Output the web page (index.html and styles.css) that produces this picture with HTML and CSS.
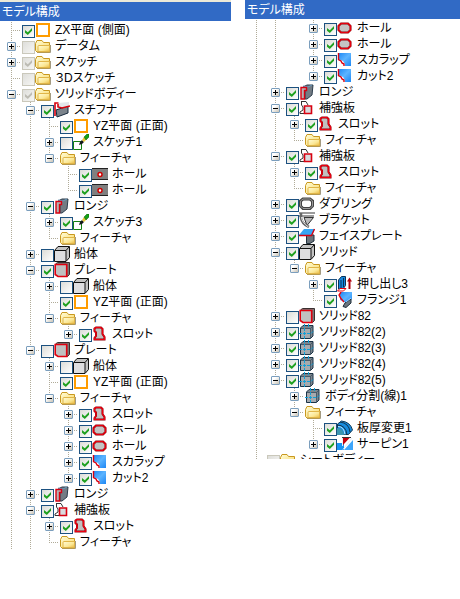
FILE: index.html
```html
<!DOCTYPE html>
<html lang="ja">
<head>
<meta charset="utf-8">
<meta name="viewport" content="width=device-width, initial-scale=1">
<title>モデル構成</title>
<link rel="stylesheet" href="styles.css">
</head>
<body>
<svg class="defs" aria-hidden="true">
  <defs>
    <linearGradient id="gold" x1="0" y1="0" x2="1" y2="1"><stop offset="0" stop-color="#fffcd8"/><stop offset=".6" stop-color="#fbe794"/><stop offset="1" stop-color="#e8b840"/></linearGradient>
    <linearGradient id="blue" x1="0" y1="0" x2="1" y2="1"><stop offset="0" stop-color="#1c86f4"/><stop offset=".5" stop-color="#5cb4ff"/><stop offset="1" stop-color="#1c86f4"/></linearGradient>
  </defs>
  <symbol id="plane" viewBox="0 0 16 16"><path d="M2 2h12v12H2z" fill="#fff" stroke="#ff9c00" stroke-width="2"/></symbol>
  <symbol id="folder" viewBox="0 0 16 16"><path d="M2 14.500h13.500V7" fill="none" stroke="#a39a80"/><path d="M.5 5.500l1.500-3h5l1.500 2h6v9.500H2L.5 12.500z" fill="url(#gold)" stroke="#c9981f"/><path d="M3 13.500v-5q0-1 1-1h10.500v6z" fill="url(#gold)" stroke="#e0b548"/></symbol>
  <symbol id="stiff" viewBox="0 0 16 16"><path d="M2 8l12-4v7L3 15z" fill="#7b838b" stroke="#17293c"/><path d="M4 1l11-1v4L8 6 4 5z" fill="#e3e6ea"/><path d="M4.500 1H1v13M4 2v3l4 1 8-2" fill="none" stroke="#d8000c" stroke-width="1.600"/></symbol>
  <symbol id="sketch" viewBox="0 0 16 16"><path d="M.5 7.500h8v8h-8z" fill="#fff" stroke="#138013"/><path d="M6 11l1-3 2-2 2 2-2 2z" fill="#15191c"/><path d="M9 6l2-3 3 2-3 3z" fill="#e8c83c"/><path d="M11 3l3-3h2v3l-3 3z" fill="#16a016" stroke="#0a5c0a" stroke-width=".5"/></symbol>
  <symbol id="darkhole" viewBox="0 0 16 16"><path d="M0 2h16v12H0z" fill="#808080"/><path d="M0 2.500h16M0 13.500h16" stroke="#222"/><circle cx="8" cy="8.500" r="2" fill="#fff" stroke="#d00000" stroke-width="1.500"/></symbol>
  <symbol id="longi" viewBox="0 0 16 16"><path d="M4 3l4-2h6l-1 10-5 4H6V5z" fill="#737c84" stroke="#2c3d4c"/><path d="M4 2l5 1 4-2" stroke="#6a9bc0" fill="none"/><path d="M2 3.500h5.500v3H5.500V15H2z" fill="#b4b4b4" stroke="#d80010" stroke-width="1.400"/></symbol>
  <symbol id="solid" viewBox="0 0 16 16"><path d="M.5 4.500l3.500-4h11.500v11l-3.500 4H.5z" fill="#c3c3c3" stroke="#101010"/><path d="M1 5h11v10H1z" fill="#dedee0"/><path d="M1 4.500h11V15M12 4.500l3-3.500" fill="none" stroke="#101010"/></symbol>
  <symbol id="plate" viewBox="0 0 16 16"><path d="M1.500 2l2-1.500h12v12l-2 2z" fill="#777" stroke="#3a3030"/><path d="M1.200 2.500h11.500v12H4l-2.800-2z" fill="#c0c0c0" stroke="#e0000f" stroke-width="1.600"/></symbol>
  <symbol id="slot" viewBox="0 0 16 16"><path d="M2.500 2.500L4 1.500h5l1.500 1.500v5l2 3v2.500h-10V12L4 10V6.500L2.500 5z" fill="#c0c0c0" stroke="#930008" stroke-width="2"/><path d="M2.500 2.500L4 1.500h5l1.500 1.500v5l2 3v2.500h-10V12L4 10V6.500L2.500 5z" fill="none" stroke="#ee0011" stroke-width="1.200"/></symbol>
  <symbol id="hole" viewBox="0 0 16 16"><path d="M4 3.500h7L13.500 6v4L11 12.500H4L1.500 10V6z" fill="#c4c4c4" stroke="#8d0008" stroke-width="2"/><path d="M4 3.500h7L13.500 6v4L11 12.500H4L1.500 10V6z" fill="none" stroke="#e8000f" stroke-width="1.200"/></symbol>
  <symbol id="cut" viewBox="0 0 16 16"><path d="M1 1h13v13H8V12L6 9 1 7z" fill="url(#blue)"/><path d="M1.500 1v6.500L4 9l1 2 2 1v2" fill="none" stroke="#d80010" stroke-width="1.400"/></symbol>
  <symbol id="stiffplate" viewBox="0 0 16 16"><path d="M2 1.500h5l2 3.500M2.500 1.500V5L4 7v3l-3 2v1.500h4" fill="none" stroke="#333"/><path d="M5.500 6h7v7.500h-7z" fill="#d9dadd" stroke="#d80010" stroke-width="1.600"/></symbol>
  <symbol id="doubling" viewBox="0 0 16 16"><path d="M4 3h7l2.500 2v5L11 12.500H4L1.500 10V5z" fill="#fff" stroke="#444" stroke-width="3"/><path d="M4 3h7l2.500 2v5L11 12.500H4L1.500 10V5z" fill="none" stroke="#999"/></symbol>
  <symbol id="bracket" viewBox="0 0 16 16"><path d="M0 1h16M0 4h15" stroke="#7b7b7b" stroke-width="1.400"/><path d="M5 5.500h9.500l-6.500 8z" fill="#bababa" stroke="#333"/><path d="M2 1v5q1 6 8 9" fill="none" stroke="#666" stroke-width="2.500"/><path d="M2.500 5q0 5 7 10" fill="none" stroke="#ddd"/></symbol>
  <symbol id="faceplate" viewBox="0 0 16 16"><path d="M7.500 7H15v6l-4 2.500H7.500z" fill="#6b747c" stroke="#20303c"/><path d="M0 7l5-6h11l-3 6z" fill="#35a5f5"/><path d="M0 7.500h12.500l3-6.500" fill="none" stroke="#d80010" stroke-width="1.400"/></symbol>
  <symbol id="extrude" viewBox="0 0 16 16"><path d="M1.500 4l3-3.500h4v9L6 13H1.500z" fill="#1689e0" stroke="#0c3055"/><path d="M4 4v8M6.500 2v9" stroke="#0c3055"/><path d="M.5 15L3 12.500h6L6.500 15z" fill="#fff" stroke="#e8000f"/><path d="M12.500 13V4" stroke="#b0000c" stroke-width="2"/><path d="M10 5.500l2.500-4 2.500 4z" fill="#b0000c"/></symbol>
  <symbol id="flange" viewBox="0 0 16 16"><path d="M3 0h12v7l-6 4-6-3z" fill="url(#blue)"/><path d="M8 11l6-4v4l-5 4.500-3-1z" fill="#6d767f" stroke="#1d2c38"/><path d="M9 10l5-4" stroke="#9cd1ff"/><path d="M4 0L2 3q1 3 5 7" fill="none" stroke="#e8000f" stroke-width="1.400"/></symbol>
  <symbol id="split" viewBox="0 0 16 16"><path d="M1.500 4L4 1.500h10V12l-2.500 2.500h-10z" fill="#7b848c" stroke="#1b3346"/><path d="M2 5h9v9H2z" fill="#a6aaae"/><path d="M2 4.500h9.500V14M11.500 4.500L14 2" fill="none" stroke="#34495a" stroke-width=".7"/><path d="M5.500 0v16M9.500 0v4M0 9.500h12l3-3" fill="none" stroke="#10a0d8" stroke-dasharray="3 1"/></symbol>
  <symbol id="thick" viewBox="0 0 16 16"><path d="M.5 4l4-3q9 1 11 9l-4 4.500H.5z" fill="#168bdd" stroke="#103a57"/><path d="M0 5q9 0 10 10M3 2q9 1 10 10" fill="none" stroke="#12334d"/><path d="M1 6.500q6 0 7 8" fill="none" stroke="#bdeaff"/><path d="M0 8q6 0 7 7H0z" fill="#3c96b0"/></symbol>
  <symbol id="serpin" viewBox="0 0 16 16"><path d="M0 7h7v7H0z" fill="#1793f4"/><path d="M7 14L16 4v10z" fill="#3fa6fb"/><path d="M5.500 1h8L6 9z" fill="#c4000c"/><path d="M5.500 10V2M6 13.500L15 2" stroke="#e9eef5"/><path d="M5 1.500h9" stroke="#333"/></symbol>
</svg>

<main class="panels">
<section class="panel framed">
<h2 class="title">モデル構成</h2>
<ul class="tree">
  <li><label class="node"><input type="checkbox" checked><svg><use href="#plane"/></svg>ZX平面 (側面)</label></li>
  <li><button class="toggle plus" aria-label="開く"></button><label class="node"><input type="checkbox" disabled><svg><use href="#folder"/></svg>データム</label></li>
  <li><button class="toggle plus" aria-label="開く"></button><label class="node"><input type="checkbox" checked disabled><svg><use href="#folder"/></svg>スケッチ</label></li>
  <li><label class="node"><input type="checkbox" disabled><svg><use href="#folder"/></svg>３Dスケッチ</label></li>
  <li class="more"><button class="toggle" aria-label="閉じる"></button><label class="node"><input type="checkbox" checked disabled><svg><use href="#folder"/></svg>ソリッドボディー</label>
    <ul>
      <li><button class="toggle" aria-label="閉じる"></button><label class="node"><input type="checkbox" checked><svg><use href="#stiff"/></svg>スチフナ</label>
        <ul>
          <li><label class="node"><input type="checkbox" checked><svg><use href="#plane"/></svg>YZ平面 (正面)</label></li>
          <li><button class="toggle plus" aria-label="開く"></button><label class="node"><input type="checkbox"><svg><use href="#sketch"/></svg>スケッチ1</label></li>
          <li><button class="toggle" aria-label="閉じる"></button><span class="node"><svg><use href="#folder"/></svg>フィーチャ</span>
            <ul>
              <li><label class="node"><input type="checkbox" checked><svg><use href="#darkhole"/></svg>ホール</label></li>
              <li><label class="node"><input type="checkbox" checked><svg><use href="#darkhole"/></svg>ホール</label></li>
            </ul>
          </li>
        </ul>
      </li>
      <li><button class="toggle" aria-label="閉じる"></button><label class="node"><input type="checkbox" checked><svg><use href="#longi"/></svg>ロンジ</label>
        <ul>
          <li><button class="toggle plus" aria-label="開く"></button><label class="node"><input type="checkbox" checked><svg><use href="#sketch"/></svg>スケッチ3</label></li>
          <li><span class="node"><svg><use href="#folder"/></svg>フィーチャ</span></li>
        </ul>
      </li>
      <li><button class="toggle plus" aria-label="開く"></button><label class="node"><input type="checkbox"><svg><use href="#solid"/></svg>船体</label></li>
      <li><button class="toggle" aria-label="閉じる"></button><label class="node"><input type="checkbox" checked><svg><use href="#plate"/></svg>プレート</label>
        <ul>
          <li><button class="toggle plus" aria-label="開く"></button><label class="node"><input type="checkbox"><svg><use href="#solid"/></svg>船体</label></li>
          <li><label class="node"><input type="checkbox" checked><svg><use href="#plane"/></svg>YZ平面 (正面)</label></li>
          <li><button class="toggle" aria-label="閉じる"></button><span class="node"><svg><use href="#folder"/></svg>フィーチャ</span>
            <ul>
              <li><button class="toggle plus" aria-label="開く"></button><label class="node"><input type="checkbox" checked><svg><use href="#slot"/></svg>スロット</label></li>
            </ul>
          </li>
        </ul>
      </li>
      <li><button class="toggle" aria-label="閉じる"></button><label class="node"><input type="checkbox"><svg><use href="#plate"/></svg>プレート</label>
        <ul>
          <li><button class="toggle plus" aria-label="開く"></button><label class="node"><input type="checkbox"><svg><use href="#solid"/></svg>船体</label></li>
          <li><label class="node"><input type="checkbox" checked><svg><use href="#plane"/></svg>YZ平面 (正面)</label></li>
          <li><button class="toggle" aria-label="閉じる"></button><span class="node"><svg><use href="#folder"/></svg>フィーチャ</span>
            <ul>
              <li><button class="toggle plus" aria-label="開く"></button><label class="node"><input type="checkbox" checked><svg><use href="#slot"/></svg>スロット</label></li>
              <li><button class="toggle plus" aria-label="開く"></button><label class="node"><input type="checkbox" checked><svg><use href="#hole"/></svg>ホール</label></li>
              <li><button class="toggle plus" aria-label="開く"></button><label class="node"><input type="checkbox" checked><svg><use href="#hole"/></svg>ホール</label></li>
              <li><button class="toggle plus" aria-label="開く"></button><label class="node"><input type="checkbox" checked><svg><use href="#cut"/></svg>スカラップ</label></li>
              <li><button class="toggle plus" aria-label="開く"></button><label class="node"><input type="checkbox" checked><svg><use href="#cut"/></svg>カット2</label></li>
            </ul>
          </li>
        </ul>
      </li>
      <li><button class="toggle plus" aria-label="開く"></button><label class="node"><input type="checkbox" checked><svg><use href="#longi"/></svg>ロンジ</label></li>
      <li class="more"><button class="toggle" aria-label="閉じる"></button><label class="node"><input type="checkbox" checked><svg><use href="#stiffplate"/></svg>補強板</label>
        <ul>
          <li><button class="toggle plus" aria-label="開く"></button><label class="node"><input type="checkbox" checked><svg><use href="#slot"/></svg>スロット</label></li>
          <li><span class="node"><svg><use href="#folder"/></svg>フィーチャ</span></li>
        </ul>
      </li>
    </ul>
  </li>
</ul>
</section>

<section class="panel">
<h2 class="title">モデル構成</h2>
<ul class="tree">
  <li class="continued">
    <ul>
      <li class="continued">
        <ul>
          <li class="continued bare">
            <ul>
              <li><button class="toggle plus" aria-label="開く"></button><label class="node"><input type="checkbox" checked><svg><use href="#hole"/></svg>ホール</label></li>
              <li><button class="toggle plus" aria-label="開く"></button><label class="node"><input type="checkbox" checked><svg><use href="#hole"/></svg>ホール</label></li>
              <li><button class="toggle plus" aria-label="開く"></button><label class="node"><input type="checkbox" checked><svg><use href="#cut"/></svg>スカラップ</label></li>
              <li><button class="toggle plus" aria-label="開く"></button><label class="node"><input type="checkbox" checked><svg><use href="#cut"/></svg>カット2</label></li>
            </ul>
          </li>
        </ul>
      </li>
      <li><button class="toggle plus" aria-label="開く"></button><label class="node"><input type="checkbox" checked><svg><use href="#longi"/></svg>ロンジ</label></li>
      <li><button class="toggle" aria-label="閉じる"></button><label class="node"><input type="checkbox" checked><svg><use href="#stiffplate"/></svg>補強板</label>
        <ul>
          <li><button class="toggle plus" aria-label="開く"></button><label class="node"><input type="checkbox" checked><svg><use href="#slot"/></svg>スロット</label></li>
          <li><span class="node"><svg><use href="#folder"/></svg>フィーチャ</span></li>
        </ul>
      </li>
      <li><button class="toggle" aria-label="閉じる"></button><label class="node"><input type="checkbox" checked><svg><use href="#stiffplate"/></svg>補強板</label>
        <ul>
          <li><button class="toggle plus" aria-label="開く"></button><label class="node"><input type="checkbox" checked><svg><use href="#slot"/></svg>スロット</label></li>
          <li><span class="node"><svg><use href="#folder"/></svg>フィーチャ</span></li>
        </ul>
      </li>
      <li><button class="toggle plus" aria-label="開く"></button><label class="node"><input type="checkbox" checked><svg><use href="#doubling"/></svg>ダブリング</label></li>
      <li><button class="toggle plus" aria-label="開く"></button><label class="node"><input type="checkbox" checked><svg><use href="#bracket"/></svg>ブラケット</label></li>
      <li><button class="toggle plus" aria-label="開く"></button><label class="node"><input type="checkbox" checked><svg><use href="#faceplate"/></svg>フェイスプレート</label></li>
      <li><button class="toggle" aria-label="閉じる"></button><label class="node"><input type="checkbox" checked><svg><use href="#solid"/></svg>ソリッド</label>
        <ul>
          <li><button class="toggle" aria-label="閉じる"></button><span class="node"><svg><use href="#folder"/></svg>フィーチャ</span>
            <ul>
              <li><button class="toggle plus" aria-label="開く"></button><label class="node"><input type="checkbox" checked><svg><use href="#extrude"/></svg>押し出し3</label></li>
              <li><label class="node"><input type="checkbox" checked><svg><use href="#flange"/></svg>フランジ1</label></li>
            </ul>
          </li>
        </ul>
      </li>
      <li><button class="toggle plus" aria-label="開く"></button><label class="node"><input type="checkbox"><svg><use href="#plate"/></svg>ソリッド82</label></li>
      <li><button class="toggle plus" aria-label="開く"></button><label class="node"><input type="checkbox" checked><svg><use href="#split"/></svg>ソリッド82(2)</label></li>
      <li><button class="toggle plus" aria-label="開く"></button><label class="node"><input type="checkbox" checked><svg><use href="#split"/></svg>ソリッド82(3)</label></li>
      <li><button class="toggle plus" aria-label="開く"></button><label class="node"><input type="checkbox" checked><svg><use href="#split"/></svg>ソリッド82(4)</label></li>
      <li><button class="toggle" aria-label="閉じる"></button><label class="node"><input type="checkbox" checked><svg><use href="#split"/></svg>ソリッド82(5)</label>
        <ul>
          <li><button class="toggle plus" aria-label="開く"></button><span class="node"><svg><use href="#split"/></svg>ボディ分割(線)1</span></li>
          <li><button class="toggle" aria-label="閉じる"></button><span class="node"><svg><use href="#folder"/></svg>フィーチャ</span>
            <ul>
              <li><label class="node"><input type="checkbox" checked><svg><use href="#thick"/></svg>板厚変更1</label></li>
              <li><button class="toggle plus" aria-label="開く"></button><label class="node"><input type="checkbox" checked><svg><use href="#serpin"/></svg>サーピン1</label></li>
            </ul>
          </li>
        </ul>
      </li>
    </ul>
  </li>
  <li class="more clipped"><label class="node"><input type="checkbox" disabled><svg><use href="#folder"/></svg>シートボディー</label></li>
</ul>
</section>
</main>
</body>
</html>
```

FILE: styles.css
```css
:root {
  --row: 16px;
  --step: 19px;
  --dots: #b0ab98;
}

* { box-sizing: border-box; }

body {
  margin: 0;
  background: #fff;
  color: #000;
  font-family: "Liberation Sans", "Noto Sans CJK JP", sans-serif;
  font-size: 12px;
  line-height: 16px;
  font-feature-settings: "palt";
}

.defs {
  position: absolute;
  width: 0;
  height: 0;
}

.panels {
  display: grid;
  grid-template-columns: 231fr 215fr;
  column-gap: 14px;
  align-items: start;
}

.panel { overflow: hidden; }
.framed { border-top: 2px solid #ece9d8; }

.title {
  margin: 0;
  height: 19px;
  padding-left: 2px;
  background: #316ac5;
  color: #fff;
  font-size: 12px;
  font-weight: 400;
  line-height: 20px;
}

ul {
  list-style: none;
  margin: 0;
  padding: 0;
}

.tree { padding: 1px 0 0 2px; }

/* Each item draws its own trunk line; the last one stops at its branch. */
li {
  display: grid;
  grid-template-columns: 20px 1fr;
  background: repeating-linear-gradient(var(--dots) 0 1px, transparent 1px 2px) 9px 0 / 1px 100% no-repeat;
}
li:last-child { background-size: 1px 9px; }
li.more { background-size: 1px 100%; }
li.bare { background: none; }

li > ul {
  grid-column: 1 / -1;
  padding-left: var(--step);
}

.clipped {
  height: 7px;
  overflow: hidden;
}

.node {
  grid-column: 2;
  display: flex;
  height: var(--row);
  white-space: nowrap;
}

/* Horizontal branch between the trunk and the item. */
li:not(.continued):not(.clipped)::before {
  content: "";
  grid-area: 1 / 1;
  height: 1px;
  margin: 8px 1px 0 9px;
  background: repeating-linear-gradient(90deg, var(--dots) 0 1px, transparent 1px 2px);
}

.node svg {
  flex: none;
  width: 16px;
  height: 16px;
  margin-right: 4px;
}

.toggle {
  grid-area: 1 / 1;
  width: 9px;
  height: 9px;
  margin: 4px 0 0 5px;
  padding: 0;
  border: 1px solid #7b9ebd;
  border-radius: 1px;
  background:
    linear-gradient(#000, #000) center / 5px 1px no-repeat,
    linear-gradient(135deg, #fff 30%, #c8c2b4);
  z-index: 1;
}
.plus {
  background:
    linear-gradient(#000, #000) center / 5px 1px no-repeat,
    linear-gradient(#000, #000) center / 1px 5px no-repeat,
    linear-gradient(135deg, #fff 30%, #c8c2b4);
}

input {
  appearance: none;
  flex: none;
  width: 13px;
  height: 13px;
  margin: 3px 0 0;
  border: 1px solid #1c5180;
  background: linear-gradient(135deg, #dcdcd7, #fff);
}
input:checked::before {
  content: "";
  display: block;
  width: 7px;
  height: 7px;
  margin: 2px;
  background: #21a121;
  clip-path: polygon(0 29%, 40% 62%, 100% 0, 100% 40%, 40% 100%, 0 68%);
}
input:disabled {
  border-color: #cac8bb;
  background: linear-gradient(135deg, #dededa, #f6f6f4);
}
input:disabled:checked::before { background: #bdbcb4; }
```
